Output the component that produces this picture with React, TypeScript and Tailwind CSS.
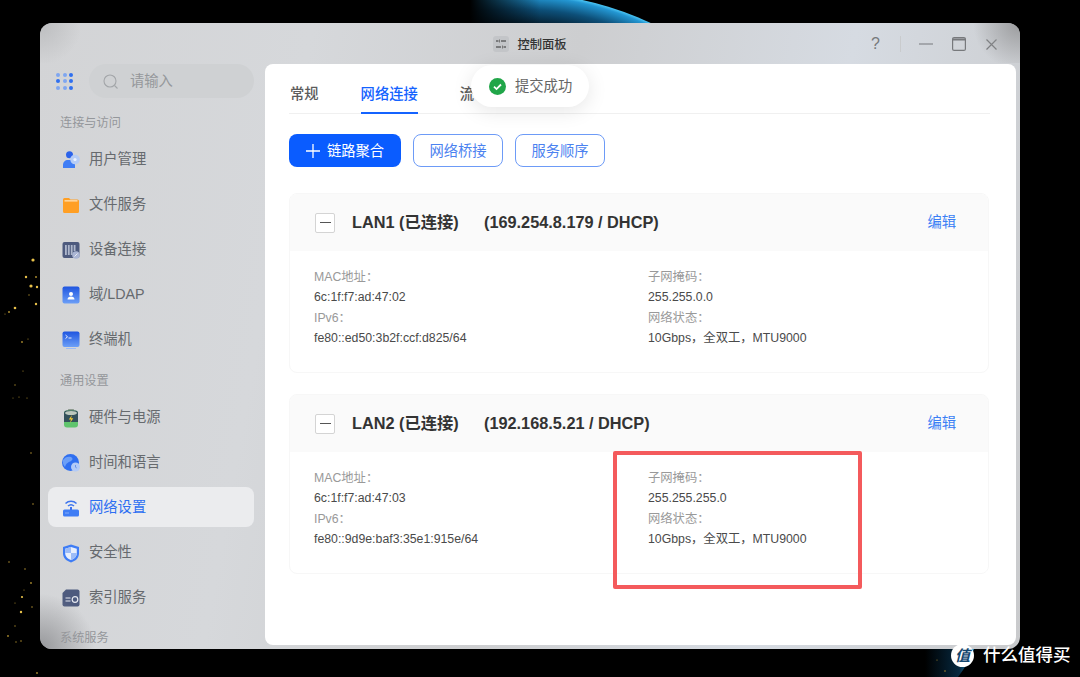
import { ReactNode } from 'react';

const stars: [number, number, number][] = [
  [33, 260, 1.6], [26, 277, 1.2], [36, 277, 1], [31, 286, 1.6], [37, 287, 1.2], [36, 304, 1.2], [29, 295, 0.7],
  [15, 308, 1.3], [9, 312, 1], [5, 314, 0.6], [22, 342, 0.9], [28, 339, 0.6], [23, 371, 0.6], [15, 385, 0.7],
  [19, 397, 0.6], [13, 398, 0.5], [27, 398, 0.6], [31, 453, 0.8], [33, 504, 0.8], [9, 562, 0.8], [25, 569, 0.8],
  [31, 583, 0.9], [24, 590, 0.6], [22, 597, 1.1], [21, 612, 1.2], [32, 607, 0.8], [15, 603, 0.6], [15, 626, 0.7],
  [8, 636, 0.9], [21, 641, 0.8], [16, 642, 0.7], [37, 673, 0.9], [945, 671, 0.8], [937, 660, 0.6], [958, 652, 0.6],
];

function Backdrop() {
  return (
    <svg className="absolute inset-0" width="1080" height="677" viewBox="0 0 1080 677">
      <defs>
        <radialGradient id="planet" gradientUnits="userSpaceOnUse" cx="516" cy="311" r="318">
          <stop offset="0.89" stopColor="#03101a" />
          <stop offset="0.95" stopColor="#0d4f78" />
          <stop offset="0.99" stopColor="#2396d2" />
          <stop offset="1" stopColor="#4cc6f4" />
        </radialGradient>
        <linearGradient id="fade" x1="0" x2="1" y1="0" y2="0">
          <stop offset="0" stopColor="#000" />
          <stop offset="1" stopColor="#000" stopOpacity="0" />
        </linearGradient>
        <linearGradient id="corner" x1="0" x2="1" y1="0" y2="0">
          <stop offset="0" stopColor="#000" />
          <stop offset="0.7" stopColor="#06283f" />
          <stop offset="1" stopColor="#2a9fd8" />
        </linearGradient>
        <linearGradient id="tile" x1="0" x2="0" y1="0" y2="1">
          <stop offset="0" stopColor="#1f55e0" />
          <stop offset="1" stopColor="#6c9ff7" />
        </linearGradient>
      </defs>
      <circle cx="516" cy="311" r="318" fill="url(#planet)" />
      <rect x="0" y="0" width="470" height="23" fill="#000" />
      <rect x="470" y="0" width="70" height="23" fill="url(#fade)" />
      <path d="M925 649H974Q968 664 958 677H925Z" fill="url(#corner)" />
      {stars.map(([x, y, r], i) => (
        <circle key={i} cx={x} cy={y} r={r} fill={r > 1 ? '#e8c14a' : '#a98a2e'} />
      ))}
    </svg>
  );
}

function GridIcon() {
  const dark = [2, 3, 5, 8];
  return (
    <div className="grid w-[17px] grid-cols-3 gap-[2.5px]">
      {[0, 1, 2, 3, 4, 5, 6, 7, 8].map((i) => (
        <span
          key={i}
          className={dark.includes(i) ? 'size-[4px] rounded-full bg-[#2f6ff0]' : 'size-[4px] rounded-full bg-[#7fa6f0]'}
        />
      ))}
    </div>
  );
}

function UserIcon() {
  return (
    <svg width="18" height="18" viewBox="0 0 18 18">
      <circle cx="7.5" cy="3.8" r="3.5" fill="#2c63ea" />
      <path d="M1 17v-3c0-3 2-5 5-5h3c2.500 0 4 2 4 5v3Z" fill="#3f7df5" />
      <circle cx="13" cy="8.5" r="4.8" fill="#b6cdf6" />
      <circle cx="13" cy="8.5" r="1.6" fill="#eef3fd" />
    </svg>
  );
}

function FolderIcon() {
  return (
    <svg width="18" height="18" viewBox="0 0 18 18">
      <path d="M1 3.5A1.500 1.500 0 0 1 2.500 2h4.500l1.500 1.500h7A1.500 1.500 0 0 1 17 5v10.500a1.500 1.500 0 0 1-1.500 1.500h-13A1.500 1.500 0 0 1 1 15.500Z" fill="#ff9f24" />
      <rect x="2.5" y="4.2" width="13" height="1.300" fill="#ffe2b5" />
    </svg>
  );
}

function DeviceIcon() {
  return (
    <svg width="18" height="18" viewBox="0 0 18 18">
      <rect x="0.5" y="1" width="17" height="16" rx="2" fill="#4d5a7e" />
      <path d="M3 4h1.800v10H3Zm2.900 0h1.800v10H5.900Zm2.900 0h1.800v10H8.800Zm2.900 0h1.800v6h-1.800Z" fill="#aeb7cc" />
      <circle cx="14" cy="14" r="3.8" fill="#aab5d4" />
      <path d="m12.500 15.500 3-3" stroke="#eef1f8" strokeWidth="0.9" />
    </svg>
  );
}

function DomainIcon() {
  return (
    <svg width="18" height="18" viewBox="0 0 18 18">
      <rect x="0.5" y="0.5" width="17" height="17" rx="2" fill="url(#tile)" />
      <circle cx="9" cy="8" r="2" fill="#fff" />
      <path d="M5.500 13.500c0-2 1.500-3 3.500-3s3.500 1 3.500 3Z" fill="#fff" />
    </svg>
  );
}

function TerminalIcon() {
  return (
    <svg width="18" height="18" viewBox="0 0 18 18">
      <rect x="0.5" y="0.5" width="17" height="15.5" rx="2" fill="url(#tile)" />
      <path d="M4 17.500h10" stroke="#9dbcf7" strokeWidth="1" />
      <path d="m3.500 4 2 1.800-2 1.800" stroke="#fff" strokeWidth="0.9" fill="none" />
      <path d="M6.500 7h3" stroke="#fff" strokeWidth="0.9" />
    </svg>
  );
}

function BatteryIcon() {
  return (
    <svg width="18" height="19" viewBox="0 0 18 19">
      <rect x="6" y="0" width="6" height="2" rx="0.5" fill="#8d9a8e" />
      <rect x="2" y="1.5" width="14" height="17" rx="3" fill="#5fc46d" />
      <path d="M2 4.500a3 3 0 0 1 3-3h8a3 3 0 0 1 3 3V13H2Z" fill="#33505a" />
      <ellipse cx="9" cy="4" rx="6" ry="2" fill="#bcc8bd" />
      <path d="M10 6 6.800 10.500H9L8 14l3.300-4.800H9Z" fill="#f4c92f" />
    </svg>
  );
}

function GlobeIcon() {
  return (
    <svg width="18" height="18" viewBox="0 0 18 18">
      <circle cx="8.5" cy="8.5" r="8.5" fill="#2f6ff0" />
      <path d="M1 6c2-3 5-4 8-3 2 1 2 3 0 4S4 9 3 13C1 11 .5 8 1 6Z" fill="#6c9ff7" />
      <circle cx="13.5" cy="13" r="4.5" fill="#b3cbf7" />
      <path d="M13.500 11v2.200l1.300.8" stroke="#4c7ee8" strokeWidth="0.7" fill="none" />
    </svg>
  );
}

function RouterIcon() {
  return (
    <svg width="18" height="18" viewBox="0 0 18 18">
      <path d="M3.500 4.500a8 8 0 0 1 11 0" stroke="#3c74ee" strokeWidth="1.5" fill="none" />
      <path d="M6 7a4.500 4.500 0 0 1 6 0" stroke="#3c74ee" strokeWidth="1.5" fill="none" />
      <path d="M9 8v3" stroke="#2c63ea" strokeWidth="1.8" />
      <rect x="1" y="10.5" width="16" height="7" rx="1.5" fill="#3f7df5" />
      <path d="M3.500 14h1m1 0h1" stroke="#dbe6fd" strokeWidth="0.9" />
    </svg>
  );
}

function ShieldIcon() {
  return (
    <svg width="18" height="19" viewBox="0 0 18 19">
      <path d="M9 .5 17 3v6.500c0 4.500-3.500 7.500-8 9-4.500-1.500-8-4.500-8-9V3Z" fill="#3f7df5" />
      <path d="M9 3 14.800 4.800v4.500c0 3.300-2.500 5.500-5.800 6.800-3.300-1.300-5.800-3.500-5.800-6.800V4.800Z" fill="#e8effd" />
      <path d="M9 3v6H3.200V4.800Zm0 6h5.800v.3c0 3.300-2.500 5.500-5.800 6.800Z" fill="#9dbcf7" />
    </svg>
  );
}

function IndexIcon() {
  return (
    <svg width="18" height="18" viewBox="0 0 18 18">
      <path d="M4 .5h11.500a2 2 0 0 1 2 2v13a2 2 0 0 1-2 2h-13a2 2 0 0 1-2-2V4Z" fill="#4d5a7e" />
      <path d="M3.500 9h5M3.500 12h5" stroke="#e5e8f0" strokeWidth="1.2" />
      <circle cx="13" cy="10.5" r="2.8" fill="none" stroke="#e5e8f0" strokeWidth="1.2" />
    </svg>
  );
}

function PanelIcon() {
  return (
    <div className="flex size-4 items-center justify-center rounded-[3px] bg-[#c3c5c8]">
      <svg width="12" height="12" viewBox="0 0 12 12" fill="none" stroke="#333" strokeWidth="1">
        <path d="M1 3h2.500M6 3h5M1 9h5M8.500 9H11" />
        <path d="M4.500 1.500v3M7.500 7.500v3" stroke="#777" />
      </svg>
    </div>
  );
}

function Item({ icon, label, active }: { icon: ReactNode; label: string; active?: boolean }) {
  return (
    <div className={active ? 'flex h-10 items-center gap-[9px] rounded-lg bg-[#ebecee] pl-[14px] pt-[2px]' : 'flex h-10 items-center gap-[9px] rounded-lg pl-[14px] pt-[2px]'}>
      <div className="flex size-[18px] items-center justify-center">{icon}</div>
      <span className={active ? 'text-[14.3px] text-[#2d6ff2]' : 'text-[14.3px] text-[#666a6e]'}>{label}</span>
    </div>
  );
}

function SectionLabel({ children, className }: { children: string; className: string }) {
  return <div className={`pl-3 text-[12.2px] leading-4 text-[#94979b] ${className}`}>{children}</div>;
}

function Sidebar() {
  return (
    <aside className="w-[225px] shrink-0 pl-2">
      <div className="flex h-[34px] items-center">
        <div className="ml-2 w-[33px]"><GridIcon /></div>
        <div className="flex h-[34px] w-[165px] items-center rounded-full bg-[#cfd1d3] pl-[14px] pt-[2px]">
          <svg width="16" height="16" viewBox="0 0 16 16" fill="none" stroke="#a3a6a9" strokeWidth="1.1">
            <circle cx="7" cy="7" r="6" />
            <path d="m11.500 11.500 3 3" />
          </svg>
          <span className="ml-[11px] text-[14.3px] text-[#95989b]">请输入</span>
        </div>
      </div>
      <SectionLabel className="mb-2 mt-[17px]">连接与访问</SectionLabel>
      <div className="flex w-[206px] flex-col gap-[5px]">
        <Item icon={<UserIcon />} label="用户管理" />
        <Item icon={<FolderIcon />} label="文件服务" />
        <Item icon={<DeviceIcon />} label="设备连接" />
        <Item icon={<DomainIcon />} label="域/LDAP" />
        <Item icon={<TerminalIcon />} label="终端机" />
      </div>
      <SectionLabel className="mb-2 mt-[14px]">通用设置</SectionLabel>
      <div className="flex w-[206px] flex-col gap-[5px]">
        <Item icon={<BatteryIcon />} label="硬件与电源" />
        <Item icon={<GlobeIcon />} label="时间和语言" />
        <Item icon={<RouterIcon />} label="网络设置" active />
        <Item icon={<ShieldIcon />} label="安全性" />
        <Item icon={<IndexIcon />} label="索引服务" />
      </div>
      <SectionLabel className="mt-[13px]">系统服务</SectionLabel>
    </aside>
  );
}

function Field({ label, value }: { label: string; value: string }) {
  return (
    <>
      <div className="text-[#999]">{label}</div>
      <div className="text-[#4a4a4a]">{value}</div>
    </>
  );
}

type LanProps = { name: string; addr: string; mac: string; ipv6: string; mask: string };

function LanCard({ name, addr, mac, ipv6, mask }: LanProps) {
  return (
    <section className="h-[180px] w-[700px] overflow-hidden rounded-lg border border-[#f7f7f7]">
      <header className="flex h-[57px] items-center bg-[#fafafa] pl-[25px] pr-[32px]">
        <div className="flex size-5 items-center justify-center rounded-[2px] border border-[#d4d4d4] bg-white">
          <span className="h-px w-[11px] bg-[#555]" />
        </div>
        <h3 className="ml-[17px] w-[132px] text-[16.3px] font-bold text-[#333]">{name}</h3>
        <span className="text-[16.3px] font-bold text-[#333]">{addr}</span>
        <span className="ml-auto text-[14.3px] text-[#3b7ff5]">编辑</span>
      </header>
      <div className="grid grid-cols-[334px_1fr] pl-6 pt-4 text-[12.3px] leading-[20.4px]">
        <div>
          <Field label="MAC地址：" value={mac} />
          <Field label="IPv6：" value={ipv6} />
        </div>
        <div>
          <Field label="子网掩码：" value={mask} />
          <Field label="网络状态：" value="10Gbps，全双工，MTU9000" />
        </div>
      </div>
    </section>
  );
}

function Content() {
  return (
    <main className="mb-1 mr-1 flex-1 rounded-lg bg-white pl-6">
      <nav className="flex h-[50px] w-[701px] items-center gap-[42px] border-b border-[#f0f0f0] pl-px pt-3 text-[14.3px] font-medium text-[#5c5c5c]">
        <span>常规</span>
        <span className="relative flex h-full items-center text-[#1463ff]">
          网络连接
          <span className="absolute inset-x-0 bottom-[-1px] h-[2px] bg-[#1463ff]" />
        </span>
        <span>流</span>
      </nav>
      <div className="mt-5 flex gap-3 text-[14.3px]">
        <button className="flex h-[33px] w-[112px] items-center justify-center gap-[7px] rounded-lg bg-[#0a5cff] text-white">
          <svg width="14" height="14" viewBox="0 0 14 14" stroke="#fff" strokeWidth="1.3">
            <path d="M7 0v14M0 7h14" />
          </svg>
          <span className="pt-[3px]">链路聚合</span>
        </button>
        <button className="h-[33px] w-[90px] rounded-lg border border-[#6d9bf7] pt-[3px] text-[#4b82f0]">网络桥接</button>
        <button className="h-[33px] w-[90px] rounded-lg border border-[#6d9bf7] pt-[3px] text-[#4b82f0]">服务顺序</button>
      </div>
      <div className="mt-[26px] flex flex-col gap-[21px]">
        <LanCard
          name="LAN1 (已连接)"
          addr="(169.254.8.179 / DHCP)"
          mac="6c:1f:f7:ad:47:02"
          ipv6="fe80::ed50:3b2f:ccf:d825/64"
          mask="255.255.0.0"
        />
        <LanCard
          name="LAN2 (已连接)"
          addr="(192.168.5.21 / DHCP)"
          mac="6c:1f:f7:ad:47:03"
          ipv6="fe80::9d9e:baf3:35e1:915e/64"
          mask="255.255.255.0"
        />
      </div>
    </main>
  );
}

function TitleBar() {
  return (
    <div className="flex h-[41px] items-center pt-[1px]">
      <div className="flex-1 pl-[23px]" />
      <div className="flex items-center gap-2">
        <PanelIcon />
        <span className="pt-[2px] text-[12.3px] font-medium text-[#333]">控制面板</span>
      </div>
      <div className="flex flex-1 items-center justify-end pr-[23px] text-[#77797c]">
        <span className="text-base leading-none">?</span>
        <span className="ml-[20px] h-4 w-px bg-[#c9cbcd]" />
        <svg className="ml-[18px]" width="14" height="14" viewBox="0 0 14 14" stroke="currentColor" strokeWidth="1.2">
          <path d="M0 7h14" />
        </svg>
        <svg className="ml-[19px]" width="14" height="14" viewBox="0 0 14 14" fill="none" stroke="currentColor" strokeWidth="1.2">
          <rect x="0.6" y="0.6" width="12.8" height="12.8" rx="1.5" />
          <path d="M0.600 2.500h12.800" strokeWidth="2" />
        </svg>
        <svg className="ml-[20px]" width="11" height="11" viewBox="0 0 11 11" stroke="currentColor" strokeWidth="1.2">
          <path d="m.5.5 10 10M10.500.5l-10 10" />
        </svg>
      </div>
    </div>
  );
}

export default function App() {
  return (
    <div className="relative h-[677px] w-[1080px] overflow-hidden bg-black font-['Liberation_Sans','Noto_Sans_CJK_SC',sans-serif]">
      <Backdrop />
      <div className="relative pl-10 pt-[23px]">
        <div className="relative flex h-[626px] w-[980px] flex-col overflow-hidden rounded-xl bg-[linear-gradient(100deg,#d3d4d6_0%,#d6d8db_25%,#cdced0_50%,#d6dbe2_75%,#c9cacc_100%)]">
          <TitleBar />
          <div className="flex min-h-0 flex-1">
            <Sidebar />
            <Content />
          </div>
          <div className="pointer-events-none absolute bottom-0 left-0 size-14 bg-[radial-gradient(circle_at_0%_100%,#96979a_0%,rgba(150,150,150,0)_70%)]" />
          <div className="pointer-events-none absolute left-0 top-0 size-10 bg-[radial-gradient(circle_at_0%_0%,#bcbdbf_0%,rgba(190,190,190,0)_75%)]" />
          <div className="pointer-events-none absolute right-0 top-0 h-10 w-12 bg-[radial-gradient(circle_at_100%_0%,#9a9b9d_0%,rgba(150,150,150,0)_75%)]" />
        </div>
      </div>

      {/* toast */}
      <div className="absolute left-[471px] top-[65px] flex h-[42px] w-[118px] items-center gap-[9px] rounded-full bg-white pl-[18px] shadow-[0_4px_20px_rgba(0,0,0,0.1)]">
        <svg width="17" height="17" viewBox="0 0 17 17">
          <circle cx="8.5" cy="8.5" r="8.5" fill="#21a649" />
          <path d="m5 8.700 2.500 2.400L12 6.500" stroke="#fff" strokeWidth="1.8" fill="none" />
        </svg>
        <span className="pt-[2px] text-[14.3px] text-[#666]">提交成功</span>
      </div>

      {/* red annotation */}
      <div className="absolute left-[613px] top-[451px] h-[138px] w-[249px] rounded-[2px] border-4 border-[#f45a5c]" />

      {/* watermark */}
      <div className="absolute left-[951px] top-[644px] flex items-center gap-[9px]">
        <div className="flex size-[23px] items-center justify-center rounded-full bg-white text-[15px] font-bold italic leading-none text-[#14466e]">值</div>
        <span className="text-[17.5px] font-medium leading-none text-white">什么值得买</span>
      </div>
    </div>
  );
}
